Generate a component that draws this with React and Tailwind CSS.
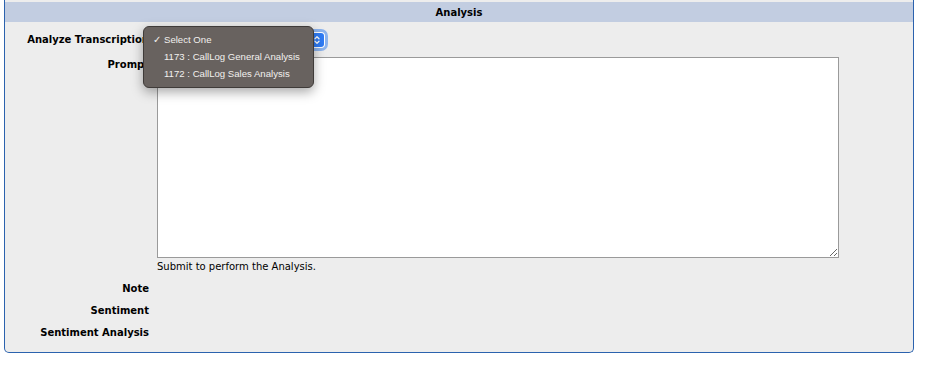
import React from 'react';

function Stepper() {
  return (
    <div className="w-[14px] h-[14px] rounded-[3px] bg-[#2f7cf6] flex items-center justify-center">
      <svg width="8" height="10" viewBox="0 0 8 10" fill="none" stroke="white" strokeWidth="1.3" strokeLinecap="round" strokeLinejoin="round">
        <path d="M2 3.8 L4 1.8 L6 3.8" />
        <path d="M2 6.2 L4 8.2 L6 6.2" />
      </svg>
    </div>
  );
}

function Row({ label, children, className = '', labelClass = '' }) {
  return (
    <div className={`flex ${className}`}>
      <div className={`w-[144px] text-right font-bold text-[10px] leading-[12px] text-black shrink-0 ${labelClass}`}>{label}</div>
      <div className="ml-[8px] flex-1">{children}</div>
    </div>
  );
}

export default function App() {
  return (
    <div className="w-[926px] h-[368px] bg-white relative overflow-hidden font-['DejaVu_Sans',sans-serif]">
      {/* Panel */}
      <div className="ml-[4px] w-[910px] h-[353px] border-x border-b border-[#2b62ae] rounded-b-[5px] bg-[#ededed] pt-[2px]">
        <div className="h-[20px] bg-[#c2cde1] flex items-center justify-center text-[10px] font-bold text-black">
          Analysis
        </div>

        {/* Analyze Transcription */}
        <Row label="Analyze Transcription" className="mt-[10px] items-center h-[16px]">
          <div className="w-[168px] h-[16px] bg-white rounded-[4px] ring-[3px] ring-[#8db4ee] flex items-center justify-end pr-[1px]">
            <Stepper />
          </div>
        </Row>

        {/* Prompt */}
        <Row label="Prompt" className="mt-[9px]" labelClass="pt-[2px]">
          <textarea className="w-[682px] h-[201px] border border-[#9a9a9a] bg-white block resize outline-none" />
        </Row>
        <Row label="" className="mt-[3px]">
          <div className="text-[10px] leading-[12px] text-black">Submit to perform the Analysis.</div>
        </Row>

        <Row label="Note" className="mt-[10px]" />
        <Row label="Sentiment" className="mt-[10px]" />
        <Row label="Sentiment Analysis" className="mt-[10px]" />
      </div>

      {/* Open select menu */}
      <div className="absolute left-[143px] top-[26px] w-[171px] h-[62px] rounded-[6px] bg-[#68625f] border border-[#3f3b39] shadow-[0_4px_12px_rgba(0,0,0,0.35)] font-['Liberation_Sans',sans-serif] text-[9.6px] text-[#f2f0ee] pt-[5px]">
        <div className="flex items-center h-[17px]">
          <span className="w-[20px] text-right pr-[3px]">✓</span>
          <span>Select One</span>
        </div>
        <div className="flex items-center h-[17px]">
          <span className="w-[20px]"></span>
          <span>1173 : CallLog General Analysis</span>
        </div>
        <div className="flex items-center h-[17px]">
          <span className="w-[20px]"></span>
          <span>1172 : CallLog Sales Analysis</span>
        </div>
      </div>
    </div>
  );
}
